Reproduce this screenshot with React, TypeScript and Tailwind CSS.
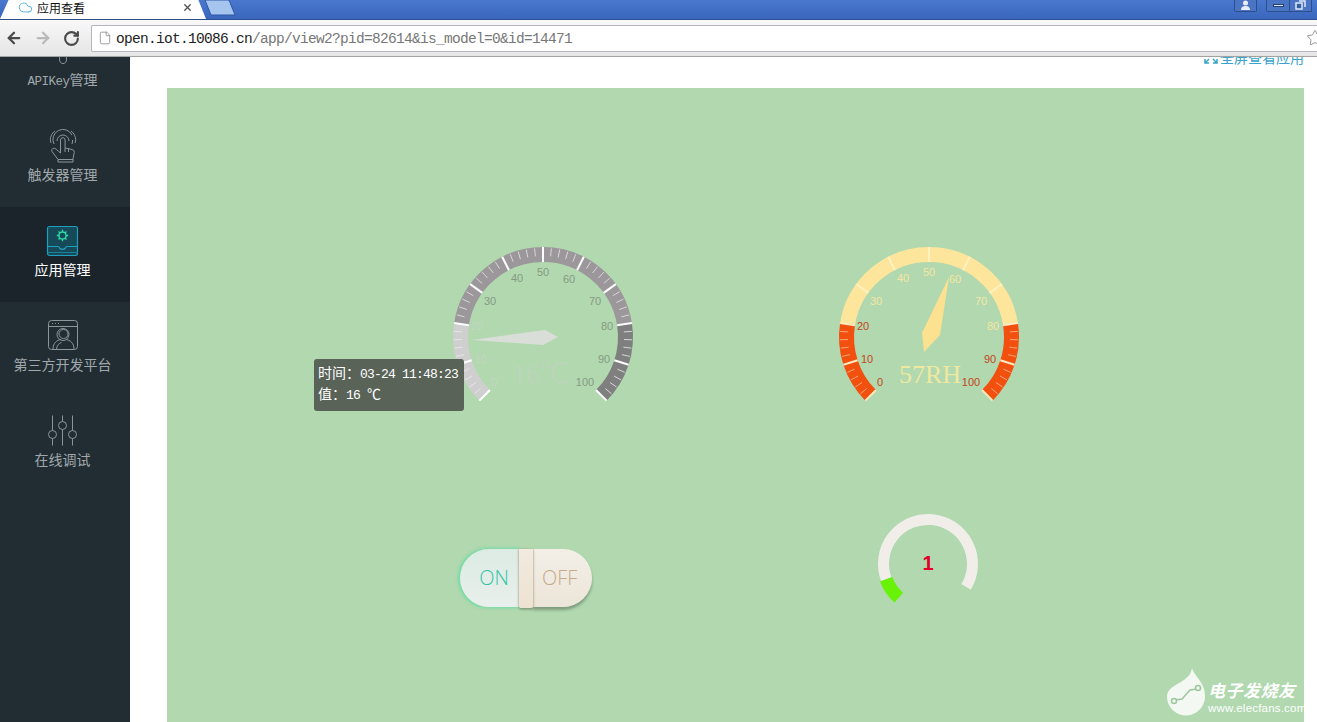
import { ArrowLeft, ArrowRight, Cloud, File, RotateCw, Star, X } from "lucide-react";

const polar = (r: number, value: number, c = 100) => {
  const a = ((225 - 2.7 * value) * Math.PI) / 180;
  return [c + r * Math.cos(a), c - r * Math.sin(a)];
};

const arc = (r: number, from: number, to: number) => {
  const [x1, y1] = polar(r, from);
  const [x2, y2] = polar(r, to);
  return `M${x1} ${y1}A${r} ${r} 0 ${(to - from) * 2.7 > 180 ? 1 : 0} 1 ${x2} ${y2}`;
};

const labelPos: [number, number, number][] = [
  [0, -49, 45],
  [10, -62, 22],
  [20, -66, -11],
  [30, -53, -36],
  [40, -26, -59],
  [50, 0, -65],
  [60, 26, -58],
  [70, 52, -36],
  [80, 64, -11],
  [90, 61, 22],
  [100, 42, 45],
];

type GaugeProps = {
  low: string;
  mid: string;
  high: string;
  majorColor: (v: number) => string;
  minorColor: (v: number) => string;
  labelColor: (v: number) => string;
  pointer: string;
  pointerColor: string;
  value: string;
  valueSize: number;
  valueColor: string;
  valueX: number;
};

const Gauge = (p: GaugeProps) => {
  const minors = Array.from({ length: 51 }, (_, i) => i * 2).filter((v) => v % 10 !== 0);
  const majors = labelPos.map((l) => l[0]);
  return (
    <svg width="200" height="200" viewBox="0 0 200 200" className="block">
      <path d={arc(82.5, 0, 20)} fill="none" stroke={p.low} strokeWidth="15" />
      <path d={arc(82.5, 20, 80)} fill="none" stroke={p.mid} strokeWidth="15" />
      <path d={arc(82.5, 80, 100)} fill="none" stroke={p.high} strokeWidth="15" />
      {minors.map((v) => {
        const [x1, y1] = polar(89, v);
        const [x2, y2] = polar(81, v);
        return <line key={v} x1={x1} y1={y1} x2={x2} y2={y2} stroke={p.minorColor(v)} strokeWidth="1" />;
      })}
      {majors.map((v) => {
        const [x1, y1] = polar(90, v);
        const [x2, y2] = polar(75, v);
        return <line key={v} x1={x1} y1={y1} x2={x2} y2={y2} stroke={p.majorColor(v)} strokeWidth="2" />;
      })}
      {labelPos.map(([v, dx, dy]) => (
        <text key={v} x={100 + dx} y={104 + dy} textAnchor="middle" fontSize="11" fill={p.labelColor(v)}>
          {v}
        </text>
      ))}
      <polygon points={p.pointer} fill={p.pointerColor} />
      <text
        x={p.valueX}
        y="146"
        textAnchor="middle"
        fontSize={p.valueSize}
        fill={p.valueColor}
        className="font-['Liberation_Serif','Noto_Sans_CJK_SC',serif]"
      >
        {p.value}
      </text>
    </svg>
  );
};

const iconStroke = "#8b959a";

const KeyIcon = () => (
  <svg width="34" height="34" viewBox="0 0 34 34" fill="none" stroke={iconStroke} strokeWidth="1">
    <ellipse cx="17" cy="25" rx="3.500" ry="4.500" />
    <path d="M17 4v16" />
  </svg>
);

const HandIcon = () => (
  <svg width="34" height="34" viewBox="0 0 34 34" fill="none" stroke={iconStroke} strokeWidth="1">
    <path d="M11 12a6 6 0 0 1 12 0M8 15a10 10 0 0 1 18 -9M26 15a10 10 0 0 0 .5 -4M5 14C3 9 6 4 9 2M29 14c2-5-1-10-4-12" />
    <path d="M14.500 11a2.300 2.300 0 0 1 4.600 0v8l7 1.500q2.400.6 2.200 3l-1.300 6v3.500H12v-2.500l-6-8q-1-2 .8-3t3.700 1l4 3.500z" />
    <path d="M19 19v4M22.500 20v3M12 30.500h15" />
  </svg>
);

const AppIcon = () => (
  <svg width="34" height="34" viewBox="0 0 34 34" fill="none">
    <rect x="1.500" y="2.500" width="30" height="29" rx="2" fill="#174a58" stroke="#1e9fbd" strokeWidth="1.200" />
    <path d="M2 22.500h10q1 0 1.500 1.500a4 4 0 0 0 6 0q.5-1.500 1.500-1.500h10" stroke="#1e9fbd" strokeWidth="1.200" />
    <path d="M2 28.500h30" stroke="#1e7f9a" strokeWidth="1" />
    <circle cx="16.500" cy="11.500" r="3.600" stroke="#2fdca6" strokeWidth="1.500" />
    <path
      d="M16.500 5.800v2M16.500 15.200v2M10.800 11.500h2M20.200 11.500h2M12.500 7.500l1.400 1.400M19.100 14.100l1.400 1.400M12.500 15.500l1.400-1.400M19.100 8.900l1.400-1.400"
      stroke="#2fdca6"
      strokeWidth="1.300"
    />
  </svg>
);

const WindowIcon = () => (
  <svg width="34" height="34" viewBox="0 0 34 34" fill="none" stroke={iconStroke} strokeWidth="1">
    <rect x="2.500" y="1.500" width="29" height="29" rx="3" />
    <path d="M2.500 7.500h29" />
    <path d="M6 4.500h1M9 4.500h1M12 4.500h1" />
    <circle cx="17.500" cy="15" r="4.500" />
    <circle cx="17" cy="15.500" r="6" />
    <path d="M7 30c0-6 4-9 8-9.500M28 30c0-6-4-9-8-9.500M10.500 30c.5-4 3-6 5-6.500" />
  </svg>
);

const SlidersIcon = () => (
  <svg width="34" height="34" viewBox="0 0 34 34" fill="none" stroke={iconStroke} strokeWidth="1">
    <path d="M6.500 1.500v15M6.500 24.500v7M16.500 1.500v6M16.500 15.500v16M26.500 1.500v15M26.500 24.500v7" />
    <circle cx="6.500" cy="20.500" r="4" />
    <circle cx="16.500" cy="11.500" r="4" />
    <circle cx="26.500" cy="20.500" r="4" />
  </svg>
);

const menu = [
  { id: "key", label: <><span className="text-[12.500px] tracking-[-0.5px]">APIKey</span>管理</>, icon: <KeyIcon /> },
  { id: "trigger", label: "触发器管理", icon: <HandIcon /> },
  { id: "app", label: "应用管理", icon: <AppIcon />, active: true },
  { id: "third", label: "第三方开发平台", icon: <WindowIcon /> },
  { id: "debug", label: "在线调试", icon: <SlidersIcon /> },
];

const App = () => {
  return (
    <div className="relative h-[722px] w-[1317px] overflow-hidden bg-white font-['Liberation_Mono','Noto_Sans_CJK_SC',monospace]">
      {/* title bar */}
      <div className="flex h-5 items-end justify-between border-b border-[#2c4f8c] bg-gradient-to-b from-[#4a78cf] to-[#3a66bd]">
        <div className="flex h-5 items-stretch">
          <svg width="9" height="20" viewBox="0 0 9 20" className="block">
            <polygon points="0,20 9,0 9,20" fill="#ffffff" />
          </svg>
          <div className="flex w-[189px] items-center bg-white pb-[3px] pl-[9px] text-[12px] text-[#111] font-['Noto_Sans_CJK_SC',sans-serif]">
            <Cloud size={15} strokeWidth={1.5} className="text-[#55b0de]" />
            <span className="ml-1">应用查看</span>
            <X size={11} strokeWidth={3} className="ml-[97px] text-[#555]" />
          </div>
          <svg width="8" height="20" viewBox="0 0 8 20" className="block">
            <polygon points="0,0 8,20 0,20" fill="#ffffff" />
          </svg>
          <svg width="32" height="18" viewBox="0 0 32 18" className="-ml-[2px] block">
            <polygon points="1,1 25,1 31,16 7,16" fill="#a5c5ee" stroke="#2d56a6" />
          </svg>
        </div>
        <div className="flex h-5 items-start pr-[5px]">
          <div className="mr-[9px] flex h-[13px] w-[23px] items-center justify-center rounded-b-[2px] border border-t-0 border-[#2c4f8c] bg-[#4a74c4]">
            <svg width="11" height="10" viewBox="0 0 11 10">
              <circle cx="5.500" cy="3" r="2.500" fill="#e8eefa" />
              <path d="M1 10q0-4 4.500-4t4.500 4z" fill="#e8eefa" />
            </svg>
          </div>
          <div className="flex h-[13px] w-[24px] items-center justify-center rounded-bl-[2px] border border-t-0 border-[#2c4f8c] bg-[#4a74c4]">
            <div className="h-[3px] w-[11px] border border-[#243f73] bg-[#dfe8f8]" />
          </div>
          <div className="flex h-[13px] w-[22px] items-center justify-center border border-l-0 border-t-0 border-[#2c4f8c] bg-[#4a74c4]">
            <svg width="11" height="10" viewBox="0 0 11 10" fill="none" stroke="#dfe8f8" strokeWidth="1.500">
              <rect x="1" y="3" width="6" height="6" fill="#36609f" />
              <path d="M4 1h6v6" />
            </svg>
          </div>
        </div>
      </div>

      {/* toolbar */}
      <div className="flex h-[37px] items-center border-b border-[#a3a3a3] bg-gradient-to-b from-[#f8f8f8] to-[#e6e6e6] pl-[5px]">
        <ArrowLeft size={18} strokeWidth={3} className="text-[#4a4a4a]" />
        <ArrowRight size={18} strokeWidth={3} className="ml-[11px] text-[#b9b9b9]" />
        <RotateCw size={17} strokeWidth={3} className="ml-[11px] text-[#4a4a4a]" />
        <div className="ml-[11px] flex h-[27px] flex-1 items-center rounded-l-[2px] border border-[#b9b3bd] border-r-0 bg-white pl-[6px]">
          <File size={14} strokeWidth={1.2} className="text-[#777]" />
          <span className="ml-[4px] pt-[3px] text-[14.500px] tracking-[-0.7px] text-[#222]">open.iot.10086.cn</span>
          <span className="pt-[3px] text-[14.500px] tracking-[-0.7px] text-[#777]">/app/view2?pid=82614&amp;is_model=0&amp;id=14471</span>
          <Star size={18} strokeWidth={1.2} className="ml-auto -mr-[7px] shrink-0 text-[#8a8a8a]" />
        </div>
      </div>

      <div className="flex h-[665px]">
        {/* sidebar */}
        <aside className="w-[130px] shrink-0 overflow-hidden bg-[#222d33]">
          <div className="-mt-[40px]">
            {menu.map((item) => (
              <div
                key={item.id}
                className={`flex h-[95px] flex-col items-center pr-[5px] pt-[17px] ${item.active ? "bg-[#1a242a]" : ""}`}
              >
                {item.icon}
                <div className={`mt-[3px] text-[14px] leading-5 ${item.active ? "text-white" : "text-[#a0a8ac]"}`}>
                  {item.label}
                </div>
              </div>
            ))}
          </div>
        </aside>

        {/* main */}
        <main className="flex min-w-0 flex-1 flex-col overflow-hidden bg-white">
          <div className="h-[31px] shrink-0 overflow-hidden pr-[13px]">
            <div className="-mt-[8px] flex items-center justify-end text-[14px] leading-4 text-[#3aa3cc] font-['Noto_Sans_CJK_SC',sans-serif]">
              <svg width="14" height="14" viewBox="0 0 14 14" fill="none" stroke="#3aa3cc" strokeWidth="1.500" className="mr-[2px]">
                <path d="M1 9v4h4M13 9v4H9M1 13l4-4M13 13l-4-4" />
              </svg>
              全屏查看应用
            </div>
          </div>

          <div className="ml-[37px] mr-[13px] flex-1 bg-[#b1d8af] pl-[276px] pt-[149px]">
            <div className="grid grid-cols-[386px_386px] gap-y-[67px] font-['Liberation_Sans',sans-serif]">
              <div className="relative h-[200px]">
                <Gauge
                  low="#cfcfcf"
                  mid="#9b979a"
                  high="#7f7f7f"
                  majorColor={() => "#ffffff"}
                  minorColor={(v) => (v < 20 ? "#e6e6e6" : "#d8d8d8")}
                  labelColor={(v) => (v <= 20 ? "#c4d6c0" : "#879a85")}
                  pointer="29,103 102,93 115,100 100,108"
                  pointerColor="#d9dfd8"
                  value="16℃"
                  valueSize={28}
                  valueColor="#bcd5ba"
                  valueX={97}
                />
                <div className="absolute left-[-129px] top-[122px] h-[52px] w-[150px] rounded-[3px] bg-[#5a6358] px-1 pt-[5px] text-white font-['Liberation_Mono','Noto_Sans_CJK_SC',monospace]">
                  <div className="h-[21px] whitespace-nowrap text-[14px] leading-5">
                    时间：<span className="text-[13px] tracking-[-0.8px]">03-24 11:48:23</span>
                  </div>
                  <div className="h-[21px] whitespace-nowrap text-[14px] leading-5">
                    值：<span className="text-[13px] tracking-[-0.8px]">16 </span>℃
                  </div>
                </div>
              </div>

              <div className="h-[200px]">
                <Gauge
                  low="#f2500f"
                  mid="#fde69c"
                  high="#f2500f"
                  majorColor={(v) => (v <= 20 || v >= 80 ? "#ffe9c0" : "#fff0c0")}
                  minorColor={(v) => (v < 20 || v > 80 ? "#f9a878" : "#fde69c")}
                  labelColor={(v) => (v <= 20 || v >= 90 ? "#c5451c" : "#f5e7a3")}
                  pointer="120,40 111,98 95,115 93,96"
                  pointerColor="#fce290"
                  value="57RH"
                  valueSize={26}
                  valueColor="#efe89f"
                  valueX={101}
                />
              </div>

              <div className="ml-[17px] pt-[45px]">
                <div className="flex h-[58px] w-[132px] font-['Open_Sans',sans-serif]">
                  <div className="flex w-[59px] items-center justify-end rounded-l-full bg-gradient-to-b from-[#dcebe4] to-[#e9efec] text-[20px] font-light text-[#35c4a4] shadow-[-1px_0_3px_1px_rgba(95,220,165,0.8)]">
                    <span className="mr-[10px]">ON</span>
                  </div>
                  <div className="relative z-10 h-[59px] w-[14px] rounded-b-[2px] bg-gradient-to-b from-[#f1eadf] to-[#eee2d2] shadow-[0_2px_2px_rgba(85,105,85,0.4),-1px_0_2px_rgba(150,125,95,0.3),1px_0_2px_rgba(150,125,95,0.3)]" />
                  <div className="flex flex-1 items-center rounded-r-full bg-gradient-to-b from-[#f3efe7] to-[#ece5d9] pl-[9px] text-[20px] font-light text-[#c7a98c] shadow-[0_3px_3px_rgba(85,105,85,0.55)]">
                    OFF
                  </div>
                </div>
              </div>

              <div className="ml-[39px]">
                <svg width="120" height="120" viewBox="0 0 120 120" className="block">
                  <path d="M18.200 75.200A44.500 44.500 0 1 1 98.100 82.900" fill="none" stroke="#f1eeea" strokeWidth="11" />
                  <path d="M18.200 75.200A44.500 44.500 0 0 0 30.800 93.600" fill="none" stroke="#67f207" strokeWidth="13" />
                  <text x="60" y="66" textAnchor="middle" fontSize="20" fontWeight="700" fill="#e2002b">
                    1
                  </text>
                </svg>
              </div>
            </div>
          </div>
        </main>
      </div>

      {/* watermark */}
      <div className="absolute bottom-[6px] right-[6px] flex items-end text-white font-['Noto_Sans_CJK_SC',sans-serif]">
        <svg width="40" height="48" viewBox="0 0 40 48" className="block">
          <path d="M26 0c2 8 13 14 13 28a19 19 0 0 1-38 1C1 15 24 16 26 0z" fill="#f4f8f2" />
          <path d="M9 32l7-1 8-9 7-1" fill="none" stroke="#9cc79c" strokeWidth="1.500" />
          <circle cx="8" cy="33" r="2.500" fill="#f4f8f2" stroke="#9cc79c" strokeWidth="1.500" />
          <circle cx="32" cy="20" r="2.500" fill="#f4f8f2" stroke="#9cc79c" strokeWidth="1.500" />
        </svg>
        <div className="ml-[2px] w-[103px]">
          <div className="text-[17px] font-bold italic leading-5 tracking-[0.5px]">电子发烧友</div>
          <div className="text-[11.500px] leading-4 tracking-[0.2px] font-['Liberation_Sans',sans-serif]">www.elecfans.com</div>
        </div>
      </div>
    </div>
  );
};

export default App;
